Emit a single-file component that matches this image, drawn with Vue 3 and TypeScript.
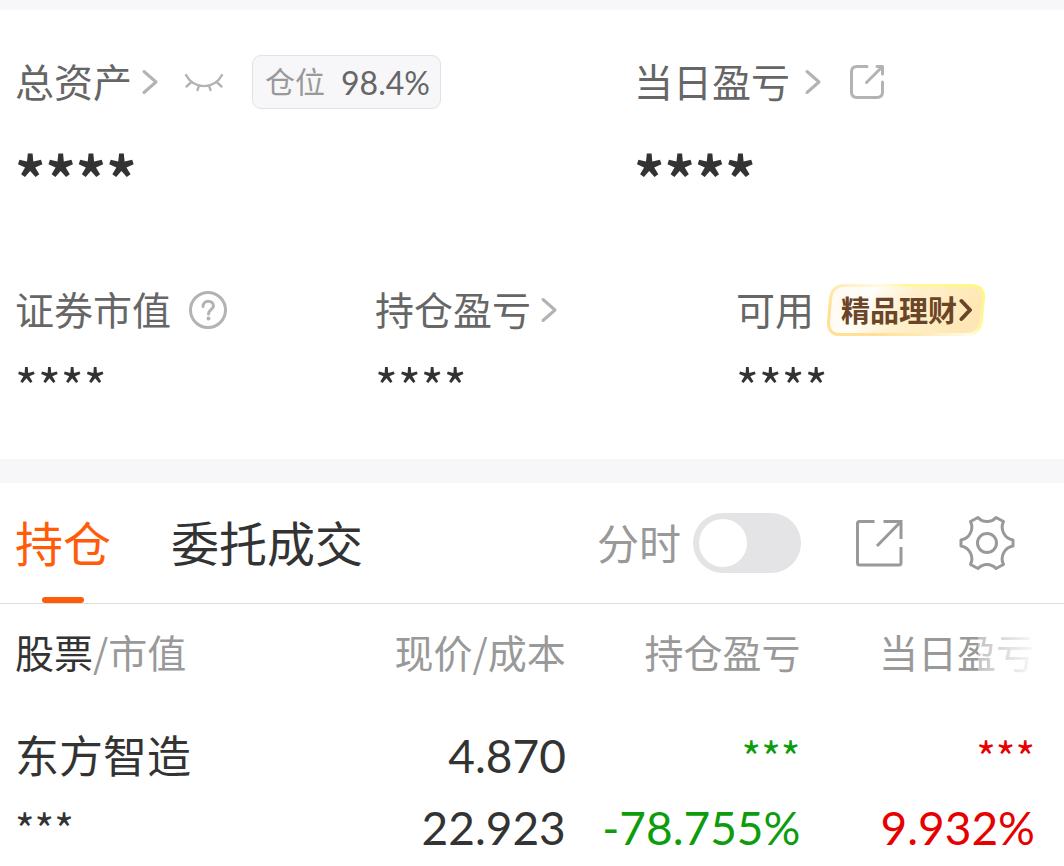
<script setup lang="ts">
import { ref } from 'vue'

interface Holding {
  name: string
  marketValue: string
  price: string
  cost: string
  totalGain: string
  totalRate: string
  dayGain: string
  dayRate: string
}

const masked = '****'
const intraday = ref(false)
const tab = ref('持仓')
const tabs = ['持仓', '委托成交']
const holdings: Holding[] = [
  {
    name: '东方智造',
    marketValue: '***',
    price: '4.870',
    cost: '22.923',
    totalGain: '***',
    totalRate: '-78.755%',
    dayGain: '***',
    dayRate: '9.932%',
  },
]
</script>

<template>
  <main class="page">
    <section class="summary">
      <div class="totals">
        <div>
          <div class="label-row">
            <button class="label" type="button">
              总资产
              <svg class="chevron" width="18" height="26" viewBox="0 0 18 26"><path d="M3 2.500L15 13L3 23.500" /></svg>
            </button>
            <button class="icon eye" type="button" aria-label="显示金额">
              <svg width="40" height="20" viewBox="0 0 40 20">
                <path d="M2 3C10 17.800 30 17.800 38 3M7.500 10L2.500 14.500M15 13.500L13.500 18M25 13.500L26.500 18M32.500 10L37.500 14.500" />
              </svg>
            </button>
            <span class="ratio"><span>仓位</span><b>98.4%</b></span>
          </div>
          <div class="big-value">{{ masked }}</div>
        </div>
        <div>
          <div class="label-row">
            <button class="label day" type="button">
              当日盈亏
              <svg class="chevron" width="18" height="26" viewBox="0 0 18 26"><path d="M3 2.500L15 13L3 23.500" /></svg>
            </button>
            <button class="icon share-small" type="button" aria-label="分享当日盈亏">
              <svg width="36" height="36" viewBox="0 0 36 36">
                <path d="M18 2.500H8Q2.500 2.500 2.500 8V28Q2.500 33.500 8 33.500H28Q33.500 33.500 33.500 28V18M28 2.500H33.500V10M33 3L17.500 18.500" />
              </svg>
            </button>
          </div>
          <div class="big-value">{{ masked }}</div>
        </div>
      </div>

      <div class="details">
        <div>
          <div class="label-row">
            <span class="label">证券市值</span>
            <button class="icon help" type="button" aria-label="说明">
              <svg width="40" height="40" viewBox="0 0 40 40">
                <circle cx="20" cy="20" r="17.500" />
                <path d="M15 16.500C15 9.500 25.500 9.500 25.500 16C25.500 19.500 20.500 19.500 20.500 24" />
                <circle class="dot" cx="20.500" cy="28.500" r="2" />
              </svg>
            </button>
          </div>
          <div class="value">{{ masked }}</div>
        </div>
        <div>
          <div class="label-row">
            <button class="label" type="button">
              持仓盈亏
              <svg class="chevron" width="18" height="26" viewBox="0 0 18 26"><path d="M3 2.500L15 13L3 23.500" /></svg>
            </button>
          </div>
          <div class="value">{{ masked }}</div>
        </div>
        <div>
          <div class="label-row">
            <span class="label">可用</span>
            <a class="promo" href="#">
              <svg class="promo-bg" viewBox="0 0 158 52" preserveAspectRatio="none">
                <defs>
                  <linearGradient id="promo-fill" x1="0" y1="0" x2="1" y2="0.200">
                    <stop offset="0" stop-color="#fffaf0" />
                    <stop offset="0.300" stop-color="#fffdf9" />
                    <stop offset="0.550" stop-color="#fff0cc" />
                    <stop offset="1" stop-color="#ffe7b5" />
                  </linearGradient>
                  <linearGradient id="promo-edge" gradientUnits="userSpaceOnUse" x1="50" y1="52" x2="90" y2="-20">
                    <stop offset="0" stop-color="#ffe095" />
                    <stop offset="0.250" stop-color="#ffe9b0" />
                    <stop offset="0.550" stop-color="#fffbe8" />
                    <stop offset="0.700" stop-color="#fdf8a0" />
                    <stop offset="1" stop-color="#fdf88a" />
                  </linearGradient>
                </defs>
                <path d="M17 1.500H144Q157 1.500 156.500 14L154.500 36Q153 50.500 139 50.500H13Q1 50.500 1.500 38L3.500 15Q5 1.500 17 1.500Z" fill="url(#promo-fill)" stroke="url(#promo-edge)" stroke-width="3" />
              </svg>
              <span>精品理财</span>
              <svg class="promo-arrow" width="14" height="24" viewBox="0 0 14 24"><path d="M2.500 3L11 12L2.500 21" /></svg>
            </a>
          </div>
          <div class="value">{{ masked }}</div>
        </div>
      </div>
    </section>

    <section class="positions">
      <div class="toolbar">
        <nav class="tabs">
          <button v-for="t in tabs" :key="t" type="button" class="tab" :class="{ active: tab === t }" @click="tab = t">{{ t }}</button>
        </nav>
        <div class="tools">
          <label class="switch-label" for="intraday">分时</label>
          <input id="intraday" v-model="intraday" class="switch" type="checkbox" role="switch" />
          <button class="icon tool share" type="button" aria-label="分享持仓">
            <svg width="48" height="48" viewBox="0 0 48 48">
              <path d="M19.500 2.500H4.500Q2.500 2.500 2.500 4.500V44Q2.500 46 4.500 46H44Q46 46 46 44V28M28.500 2.500H46V20M45.500 3L22 27" />
            </svg>
          </button>
          <button class="icon tool gear" type="button" aria-label="设置">
            <svg width="56" height="56" viewBox="0 0 56 56">
              <path d="M19 2.500A12 12 0 0 0 37 2.500L44.500 6.500A13 13 0 0 0 54 25V31A13 13 0 0 0 44.500 49.500L37 53.500A12 12 0 0 0 19 53.500L11.500 49.500A13 13 0 0 0 2 31V25A13 13 0 0 0 11.500 6.500Z" />
              <circle cx="28" cy="28" r="9.500" />
            </svg>
          </button>
        </div>
      </div>

      <div class="table-wrap">
        <table>
          <thead>
            <tr>
              <th scope="col"><b>股票</b>/市值</th>
              <th scope="col">现价/成本</th>
              <th scope="col">持仓盈亏</th>
              <th scope="col" class="fading">当日盈亏</th>
            </tr>
          </thead>
          <tbody>
            <tr v-for="h in holdings" :key="h.name">
              <td><div class="name">{{ h.name }}</div><div class="stars">{{ h.marketValue }}</div></td>
              <td><div>{{ h.price }}</div><div>{{ h.cost }}</div></td>
              <td class="down"><div class="stars">{{ h.totalGain }}</div><div>{{ h.totalRate }}</div></td>
              <td class="up"><div class="stars">{{ h.dayGain }}</div><div>{{ h.dayRate }}</div></td>
            </tr>
          </tbody>
        </table>
      </div>
    </section>
  </main>
</template>

<style>
body {
  margin: 0;
  background: #fff;
}
</style>

<style scoped>
.page {
  font-family: "Noto Sans CJK SC", sans-serif;
  color: #333;
  border-top: 10px solid #f7f7fa;
  overflow: hidden;
}
button {
  font: inherit;
  color: inherit;
  background: none;
  border: 0;
  padding: 0;
  cursor: pointer;
}
svg {
  display: block;
  flex: none;
  fill: none;
  stroke: #b3b3b3;
  stroke-width: 3;
  stroke-linecap: round;
  stroke-linejoin: round;
}
.summary {
  padding: 44px 0 34px 15px;
  border-bottom: 24px solid #f7f7fa;
}
.totals {
  display: grid;
  grid-template-columns: 619fr 430fr;
}
.details {
  display: grid;
  grid-template-columns: 360fr 361fr 328fr;
  margin-top: 62px;
}
.label-row {
  display: flex;
  align-items: center;
  height: 56px;
}
.label {
  display: flex;
  align-items: center;
  gap: 9px;
  padding-bottom: 4px;
  font-size: 39px;
  line-height: 52px;
  color: #666;
  white-space: nowrap;
}
.chevron {
  margin-top: 4px;
}
.day {
  gap: 14px;
}
.eye {
  margin-left: 25px;
}
.eye svg {
  stroke-width: 2.4;
}
.ratio {
  display: flex;
  align-items: center;
  gap: 16px;
  box-sizing: border-box;
  height: 54px;
  margin-left: 28px;
  padding: 0 10px 0 12px;
  border: 1px solid #e2e2e4;
  border-radius: 9px;
  background: #f7f7fa;
  font-size: 30px;
  color: #999;
}
.ratio span {
  padding-bottom: 4px;
}
.ratio b {
  font-family: Lato, sans-serif;
  font-size: 32px;
  font-weight: 400;
  color: #666;
}
.share-small {
  margin-left: 27px;
}
.help {
  margin-left: 17px;
}
.help .dot {
  fill: #b3b3b3;
  stroke: none;
}
.big-value {
  padding-top: 22px;
  font-size: 60px;
  font-weight: 700;
  line-height: 88px;
}
.value {
  padding-top: 7px;
  font-size: 49px;
  line-height: 80px;
}
.promo {
  position: relative;
  display: flex;
  align-items: center;
  gap: 2px;
  height: 52px;
  margin-left: 13px;
  padding: 0 12px 0 14px;
  font-size: 29px;
  font-weight: 700;
  color: #6b4528;
  text-decoration: none;
  white-space: nowrap;
}
.promo span,
.promo-arrow {
  position: relative;
}
.promo span {
  padding-bottom: 2px;
}
.promo-bg {
  position: absolute;
  inset: 0;
  width: 100%;
  height: 100%;
}
.promo-arrow {
  stroke: #6b4528;
  stroke-width: 4;
}
.toolbar {
  display: flex;
  justify-content: space-between;
  height: 120px;
  padding: 0 49px 0 15px;
  border-bottom: 1px solid #ddd;
}
.tabs {
  display: flex;
  gap: 60px;
}
.tab {
  position: relative;
  padding-bottom: 4px;
  font-size: 48px;
  line-height: 116px;
  white-space: nowrap;
}
.tab.active {
  color: #ff5c0a;
}
.tab.active::after {
  content: "";
  position: absolute;
  left: 50%;
  bottom: 0;
  width: 42px;
  height: 6px;
  margin-left: -21px;
  border-radius: 3px;
  background: #ff5c0a;
}
.tools {
  display: flex;
  align-items: center;
}
.switch-label {
  padding-bottom: 4px;
  font-size: 42px;
  color: #999;
  white-space: nowrap;
}
.switch {
  appearance: none;
  width: 108px;
  height: 60px;
  margin: 0 0 0 12px;
  padding: 6px;
  box-sizing: border-box;
  border-radius: 30px;
  background: #e4e4e6;
}
.switch::before {
  content: "";
  display: block;
  width: 48px;
  height: 48px;
  border-radius: 50%;
  background: #fff;
}
.switch:checked {
  background: #ff5c0a;
}
.switch:checked::before {
  margin-left: auto;
}
.tool svg {
  stroke: #999;
}
.share {
  margin-left: 54px;
}
.share svg {
  stroke-linecap: butt;
  stroke-linejoin: miter;
}
.gear {
  margin-left: 56px;
}
.table-wrap {
  padding: 0 29px 0 15px;
}
table {
  width: 100%;
  table-layout: fixed;
  border-collapse: collapse;
}
th,
td {
  padding: 0;
  text-align: right;
  white-space: nowrap;
  font-weight: 400;
}
th:not(:first-child) {
  width: 23%;
}
th:first-child,
td:first-child {
  text-align: left;
}
th {
  position: relative;
  height: 94px;
  font-size: 39px;
  color: #999;
}
th b {
  font-weight: 400;
  color: #333;
}
.fading::after {
  content: "";
  position: absolute;
  top: 0;
  right: 0;
  bottom: 0;
  width: 57px;
  background: linear-gradient(to right, rgba(255, 255, 255, 0.4), rgba(255, 255, 255, 0.95));
}
td {
  padding-top: 22px;
  vertical-align: top;
  font-family: Lato, sans-serif;
  font-size: 46px;
}
td div {
  height: 72px;
  line-height: 72px;
}
td .name {
  font-family: "Noto Sans CJK SC", sans-serif;
  font-size: 44px;
  line-height: 68px;
}
td .stars {
  font-family: "Noto Sans CJK SC", sans-serif;
  font-size: 42px;
}
.down {
  color: #0c9c0c;
}
.up {
  color: #e60000;
}
</style>
